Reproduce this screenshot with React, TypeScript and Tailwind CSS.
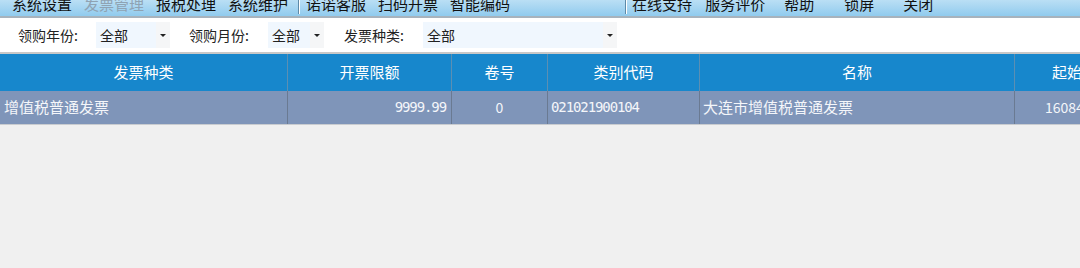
import React from "react";

const cols = [
  { title: "发票种类", w: "w-[288px]" },
  { title: "开票限额", w: "w-[164px]" },
  { title: "卷号", w: "w-[96px]" },
  { title: "类别代码", w: "w-[152px]" },
  { title: "名称", w: "w-[315px]" },
  { title: "起始号", w: "w-[120px]" },
];

function Select({ width, value }: { width: string; value: string }) {
  return (
    <div className={`flex items-center h-[26px] ${width}`}>
      <div className="flex-1 h-full bg-[#f0f7fe] flex items-center pl-[4px] text-[14px] text-[#222]">{value}</div>
      <div className="w-[14px] h-full bg-[#f5f6f7] flex items-center justify-center">
        <span className="block w-0 h-0 border-l-[3px] border-r-[3px] border-t-[3px] border-l-transparent border-r-transparent border-t-[#222]" />
      </div>
    </div>
  );
}

export default function App() {
  return (
    <div className="w-[1080px] h-[268px] overflow-hidden bg-[#f0f0f0] font-['Noto_Sans_CJK_SC','Noto_Sans',sans-serif]">
      {/* menu bar, top part is scrolled off */}
      <div className="mt-[-10px] h-[28px] flex items-center bg-gradient-to-b from-[#d4ebf8] to-[#90cbee] border-b-2 border-[#a7b3bd] text-[15px] text-[#111] leading-none">
        <div className="flex pl-[12px] gap-[12px]">
          <span>系统设置</span>
          <span className="text-[#8fa3b3]">发票管理</span>
          <span>报税处理</span>
          <span>系统维护</span>
        </div>
        <div className="ml-[10px] w-[2px] h-[22px] bg-[#5e8aa8] border-r border-white" />
        <div className="flex pl-[6px] gap-[12px]">
          <span>诺诺客服</span>
          <span>扫码开票</span>
          <span>智能编码</span>
        </div>
        <div className="ml-[115px] w-[2px] h-[22px] bg-[#5e8aa8] border-r border-white" />
        <div className="flex pl-[5px]">
          <span>在线支持</span>
          <span className="ml-[13px]">服务评价</span>
          <span className="ml-[19px]">帮助</span>
          <span className="ml-[30px]">锁屏</span>
          <span className="ml-[29px]">关闭</span>
        </div>
      </div>

      {/* filters */}
      <div className="h-[36px] bg-white flex items-center pl-[18px] text-[14px] text-[#222] border-b-2 border-[#c8c8c8]">
        <span className="w-[78px]">领购年份:</span>
        <Select width="w-[74px]" value="全部" />
        <span className="ml-[19px] w-[79px]">领购月份:</span>
        <Select width="w-[56px]" value="全部" />
        <span className="ml-[20px] w-[79px]">发票种类:</span>
        <Select width="w-[194px]" value="全部" />
      </div>

      {/* table */}
      <div className="flex h-[37px] bg-[#1787cc] text-white text-[15px]">
        {cols.map((c) => (
          <div key={c.title} className={`${c.w} shrink-0 flex items-center justify-center border-r border-[#5b8fb3]`}>
            {c.title}
          </div>
        ))}
      </div>
      <div className="flex h-[34px] bg-[#7f95b9] text-[#f4f6fa] text-[15px] border-b border-[#c9ccd0]">
        <div className="w-[288px] shrink-0 flex items-center pl-[4px] border-r border-[#6a7a92]">增值税普通发票</div>
        <div className="w-[164px] shrink-0 flex items-center justify-end pr-[5px] border-r border-[#6a7a92] font-['DejaVu_Sans_Mono',monospace] text-[14px] tracking-[-1.1px]">9999.99</div>
        <div className="w-[96px] shrink-0 flex items-center justify-center border-r border-[#6a7a92] text-[14px]">0</div>
        <div className="w-[152px] shrink-0 flex items-center pl-[3px] border-r border-[#6a7a92] font-['DejaVu_Sans_Mono',monospace] text-[14px] tracking-[-1.1px]">021021900104</div>
        <div className="w-[315px] shrink-0 flex items-center pl-[3px] border-r border-[#6a7a92]">大连市增值税普通发票</div>
        <div className="w-[120px] shrink-0 flex items-center pl-[30px] text-[14px]">16084</div>
      </div>
    </div>
  );
}
